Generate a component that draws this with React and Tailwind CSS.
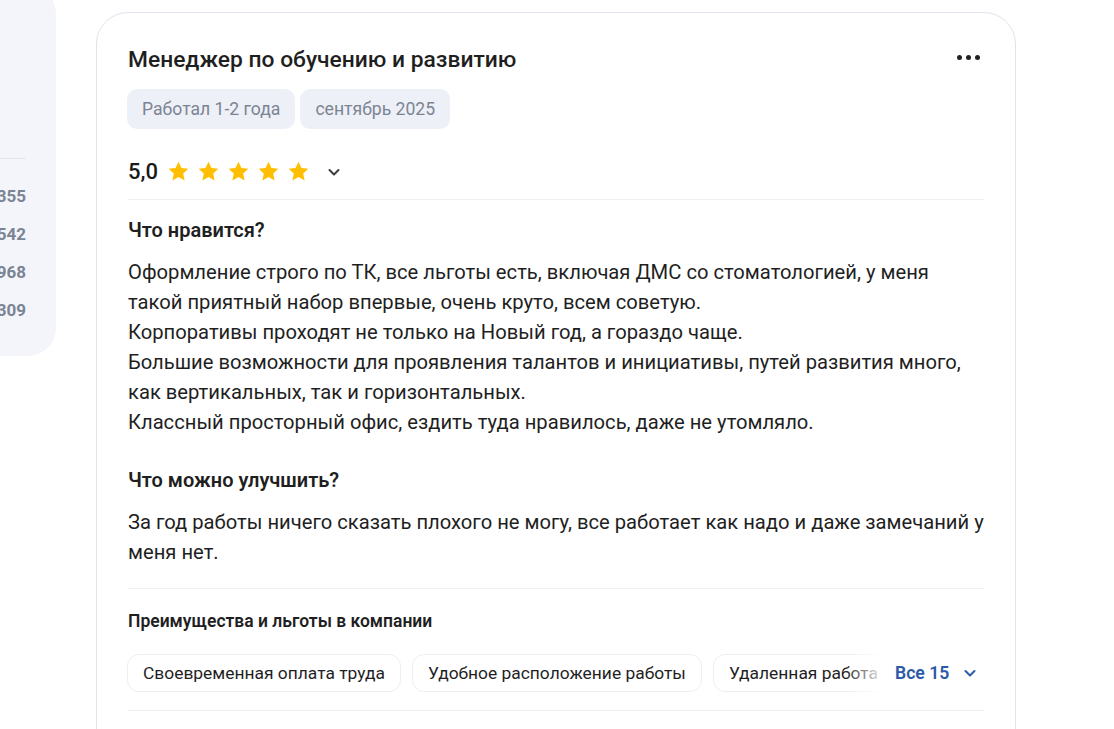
import React from "react";

const Star = () => (
  <svg width="21" height="21" viewBox="0 0 24 24" className="shrink-0">
    <path
      d="M12 0.8l3.4 7.2 7.9.9-5.9 5.4 1.6 7.9L12 18.3l-7 3.9 1.6-7.9L0.7 8.9l7.9-.9z"
      fill="#ffbf00"
    />
  </svg>
);

const Chevron = ({ color = "#3d3d3d" }) => (
  <svg width="16" height="16" viewBox="0 0 16 16" fill="none">
    <path d="M3.5 6l4.5 4.5L12.5 6" stroke={color} strokeWidth="2" strokeLinecap="round" strokeLinejoin="round" />
  </svg>
);

const benefits = [
  "Своевременная оплата труда",
  "Удобное расположение работы",
  "Удаленная работа",
];

const Sidebar = () => (
  <div className="w-[56px] shrink-0 -mt-[14px] h-[370px] bg-[#f4f5fa] rounded-r-[28px] overflow-hidden">
    <div className="mt-[172px] mr-[30px] border-t border-[#e2e5ec]" />
    <div className="flex flex-col items-end pr-[30px] pt-[27px] gap-[18px] text-[17px] leading-[20px] font-bold text-[#7b8494]">
      <span>355</span>
      <span>542</span>
      <span>968</span>
      <span>309</span>
    </div>
  </div>
);

const ReviewCard = () => (
  <div className="w-[920px] mt-[12px] h-[760px] border border-[#dfe4ec] rounded-[32px] bg-white px-[31px] pt-[32px]">
    <div className="flex items-start justify-between">
      <h2 className="text-[22.8px] leading-[30px] font-medium text-[#1f1f1f]">
        Менеджер по обучению и развитию
      </h2>
      <div className="flex gap-[4px] mt-[10px] mr-[4px]">
        <span className="w-[5px] h-[5px] rounded-full bg-[#222]" />
        <span className="w-[5px] h-[5px] rounded-full bg-[#222]" />
        <span className="w-[5px] h-[5px] rounded-full bg-[#222]" />
      </div>
    </div>

    <div className="flex gap-[5px] mt-[14px] -ml-[1px]">
      <span className="h-[40px] px-[15px] flex items-center rounded-[10px] bg-[#edf0f6] text-[17.6px] text-[#7c8494]">
        Работал 1-2 года
      </span>
      <span className="h-[40px] px-[15px] flex items-center rounded-[10px] bg-[#edf0f6] text-[17.6px] text-[#7c8494]">
        сентябрь 2025
      </span>
    </div>

    <div className="flex items-center mt-[27px] h-[30px]">
      <span className="text-[22px] font-medium text-[#1a1a1a] mr-[10px]">5,0</span>
      <div className="flex gap-[9px]">
        <Star />
        <Star />
        <Star />
        <Star />
        <Star />
      </div>
      <span className="ml-[17px] mt-[2px]">
        <Chevron />
      </span>
    </div>

    <div className="mt-[13px] border-t border-[#eef0f4]" />

    <h3 className="mt-[18px] text-[20px] leading-[24px] font-semibold text-[#1f1f1f]">Что нравится?</h3>
    <p className="mt-[15px] text-[20.2px] leading-[30px] text-[#1f1f1f]">
      Оформление строго по ТК, все льготы есть, включая ДМС со стоматологией, у меня
      <br />
      такой приятный набор впервые, очень круто, всем советую.
      <br />
      Корпоративы проходят не только на Новый год, а гораздо чаще.
      <br />
      Большие возможности для проявления талантов и инициативы, путей развития много,
      <br />
      как вертикальных, так и горизонтальных.
      <br />
      Классный просторный офис, ездить туда нравилось, даже не утомляло.
    </p>

    <h3 className="mt-[31px] text-[20px] leading-[24px] font-semibold text-[#1f1f1f]">Что можно улучшить?</h3>
    <p className="mt-[15px] text-[20.2px] leading-[30px] text-[#1f1f1f]">
      За год работы ничего сказать плохого не могу, все работает как надо и даже замечаний у
      <br />
      меня нет.
    </p>

    <div className="mt-[21px] border-t border-[#eef0f4]" />

    <h4 className="mt-[21px] text-[17.5px] leading-[22px] font-semibold text-[#1f1f1f]">
      Преимущества и льготы в компании
    </h4>

    <div className="mt-[22px] flex items-center -ml-[1px]">
      <div className="relative w-[758px] overflow-hidden">
        <div className="flex gap-[11px]">
          {benefits.map((b) => (
            <span
              key={b}
              className="shrink-0 h-[38px] px-[15px] flex items-center rounded-[12px] border border-[#eceef3] text-[17.4px] text-[#1f1f1f] whitespace-nowrap"
            >
              {b}
            </span>
          ))}
        </div>
        <div className="absolute right-0 top-0 h-full w-[40px] bg-gradient-to-r from-white/0 to-white" />
      </div>
      <button className="ml-[10px] flex items-center gap-[13px] text-[17.6px] font-semibold text-[#2c5aa8]">
        Все 15
        <Chevron color="#2c5aa8" />
      </button>
    </div>

    <div className="mt-[18px] border-t border-[#eef0f4]" />
  </div>
);

export default function App() {
  return (
    <div className="w-[1114px] h-[729px] overflow-hidden bg-white flex gap-[40px] font-['Roboto',sans-serif]">
      <Sidebar />
      <ReviewCard />
    </div>
  );
}
